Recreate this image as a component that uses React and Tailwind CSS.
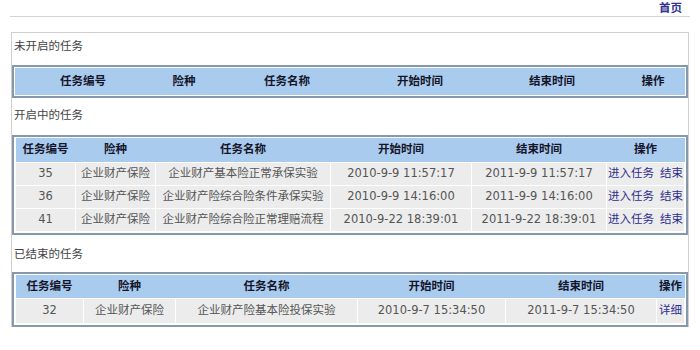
const running = [
  { id: "35", type: "企业财产保险", name: "企业财产基本险正常承保实验", start: "2010-9-9 11:57:17", end: "2011-9-9 11:57:17" },
  { id: "36", type: "企业财产保险", name: "企业财产险综合险条件承保实验", start: "2010-9-9 14:16:00", end: "2011-9-9 14:16:00" },
  { id: "41", type: "企业财产保险", name: "企业财产险综合险正常理赔流程", start: "2010-9-22 18:39:01", end: "2011-9-22 18:39:01" },
];

const finished = [
  { id: "32", type: "企业财产保险", name: "企业财产险基本险投保实验", start: "2010-9-7 15:34:50", end: "2011-9-7 15:34:50" },
];

const heads = ["任务编号", "险种", "任务名称", "开始时间", "结束时间", "操作"];

const TaskTable = ({ widths, rows, headH, rowH, renderOps }) => (
  <div className="border-2 border-[#8698ae] bg-white p-px">
    <table className="w-full table-fixed border-collapse">
      <colgroup>
        {widths.map((w, i) => (
          <col key={i} style={w ? { width: w } : undefined} />
        ))}
      </colgroup>
      <thead>
        <tr className={headH}>
          {heads.map((h) => (
            <th
              key={h}
              className="bg-[#a9cbee] p-0 text-center text-[11.5px] font-bold text-[#15152a]"
            >
              {h}
            </th>
          ))}
        </tr>
      </thead>
      <tbody>
        {rows.map((r) => (
          <tr key={r.id} className={rowH}>
            <td className="border border-white bg-[#ececec] p-0 text-center text-[11.5px] text-[#555]">{r.id}</td>
            <td className="border border-white bg-[#ececec] p-0 text-center text-[11.5px] text-[#555]">{r.type}</td>
            <td className="border border-white bg-[#ececec] p-0 text-center text-[11.5px] text-[#555]">{r.name}</td>
            <td className="border border-white bg-[#ececec] p-0 text-center text-[11.5px] text-[#555]">{r.start}</td>
            <td className="border border-white bg-[#ececec] p-0 text-center text-[11.5px] text-[#555]">{r.end}</td>
            <td className="border border-white bg-[#ececec] p-0 text-center text-[11.5px] text-[#2e2e8c]">
              {renderOps()}
            </td>
          </tr>
        ))}
      </tbody>
    </table>
  </div>
);

const App = () => {
  return (
    <div className="h-[350px] w-[700px] overflow-hidden bg-white font-['DejaVu_Sans','Noto_Sans_CJK_SC',sans-serif]">
      <div className="mx-[10px] flex h-[17px] justify-end border-b border-[#d4d4d4] pr-[8px]">
        <a className="pt-[1px] text-[11.5px] font-bold leading-[14px] text-[#33338f]">首页</a>
      </div>
      <div className="mx-[11px] mt-[15px] border border-b-0 border-[#cfcfcf]">
        <p className="h-[32px] pl-[2px] pt-[5px] text-[11.5px] leading-[16px] text-[#444]">未开启的任务</p>
        <TaskTable widths={[136, 66, 140, 126, 138, null]} rows={[]} headH="h-[27px]" rowH="h-[23px]" renderOps={() => null} />
        <p className="h-[37px] pl-[2px] pt-[9px] text-[11.5px] leading-[16px] text-[#444]">开启中的任务</p>
        <TaskTable
          widths={[60, 80, 175, 141, 135, null]}
          rows={running}
          headH="h-[24px]"
          rowH="h-[23px]"
          renderOps={() => (
            <span className="flex justify-center gap-[6px]">
              <a>进入任务</a>
              <a>结束</a>
            </span>
          )}
        />
        <p className="h-[37px] pl-[2px] pt-[11px] text-[11.5px] leading-[16px] text-[#444]">已结束的任务</p>
        <TaskTable
          widths={[68, 92, 182, 148, 151, null]}
          rows={finished}
          headH="h-[24px]"
          rowH="h-[25px]"
          renderOps={() => <a>详细</a>}
        />
      </div>
    </div>
  );
};

export default App;
